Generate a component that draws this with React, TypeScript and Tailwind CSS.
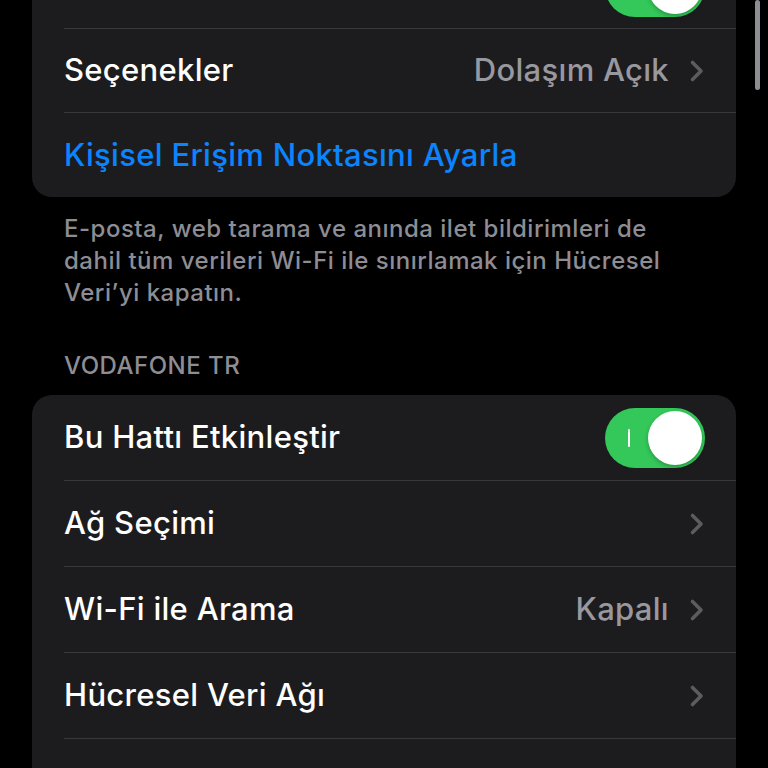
import React from 'react';

type Row = {
  label: string;
  value?: string;
  toggle?: boolean;
  chevron?: boolean;
  blue?: boolean;
};

const topRows: Row[] = [
  { label: 'Hücresel Veri', toggle: true },
  { label: 'Seçenekler', value: 'Dolaşım Açık', chevron: true },
  { label: 'Kişisel Erişim Noktasını Ayarla', blue: true },
];

const lineRows: Row[] = [
  { label: 'Bu Hattı Etkinleştir', toggle: true },
  { label: 'Ağ Seçimi', chevron: true },
  { label: 'Wi-Fi ile Arama', value: 'Kapalı', chevron: true },
  { label: 'Hücresel Veri Ağı', chevron: true },
  { label: 'SIM PIN', chevron: true },
];

function Chevron() {
  return (
    <svg width="16" height="24" viewBox="0 0 16 24" className="shrink-0">
      <path
        d="M3.5 3.5l8.5 8.5-8.5 8.5"
        fill="none"
        stroke="#5b5b60"
        strokeWidth="3.6"
        strokeLinecap="round"
        strokeLinejoin="round"
      />
    </svg>
  );
}

function Toggle() {
  return (
    <div className="relative flex h-[60px] w-[100px] shrink-0 items-center rounded-full bg-[#34c759] p-[3px]">
      <span className="ml-[20px] h-[18px] w-[2px] rounded-full bg-white" />
      <span className="ml-auto h-[54px] w-[54px] rounded-full bg-white shadow-[0_2px_4px_rgba(0,0,0,0.25)]" />
    </div>
  );
}

function SettingsRow({
  row,
  last,
  tall,
}: {
  row: Row;
  last: boolean;
  tall?: boolean;
}) {
  return (
    <div className="pl-8">
      <div
        className={`flex items-center pr-[31px] ${tall ? 'h-[86px]' : 'h-[84px]'} ${
          last ? '' : 'border-b border-[#38383a]'
        }`}
      >
        <span
          className={`flex-1 truncate text-[31px] font-medium tracking-[0.3px] ${
            row.blue ? 'text-[#0a84ff]' : 'text-white'
          }`}
        >
          {row.label}
        </span>
        {row.value && (
          <span className="mr-[20px] text-[31px] font-medium tracking-[0.3px] text-[#98989e]">
            {row.value}
          </span>
        )}
        {row.chevron && <Chevron />}
        {row.toggle && <Toggle />}
      </div>
    </div>
  );
}

function Group({ rows, tall }: { rows: Row[]; tall?: boolean }) {
  return (
    <div className="mx-8 overflow-hidden rounded-[20px] bg-[#1c1c1e]">
      {rows.map((row, i) => (
        <SettingsRow
          key={row.label}
          row={row}
          tall={tall}
          last={i === rows.length - 1}
        />
      ))}
    </div>
  );
}

export default function App() {
  return (
    <div
      className="relative h-[768px] w-[768px] overflow-hidden bg-black"
      style={{ fontFamily: 'Inter, "Noto Sans", sans-serif' }}
    >
      <div className="-mt-[55px]">
        <Group rows={topRows} />

        <p className="pl-16 pr-[60px] pt-4 text-[24px] font-medium leading-[32px] tracking-[0.5px] text-[#8d8d93]">
          E-posta, web tarama ve anında ilet bildirimleri de dahil tüm verileri
          Wi-Fi ile sınırlamak için Hücresel Veri’yi kapatın.
        </p>

        <div className="px-16 pt-[41px] pb-[13px] text-[24px] font-medium leading-[32px] tracking-[0.5px] text-[#8d8d93]">
          VODAFONE TR
        </div>

        <Group rows={lineRows} tall />
      </div>

      {/* scroll indicator */}
      <div className="absolute right-[8px] top-0 h-[90px] w-[5px] rounded-full bg-[#8e8e92]" />
    </div>
  );
}
